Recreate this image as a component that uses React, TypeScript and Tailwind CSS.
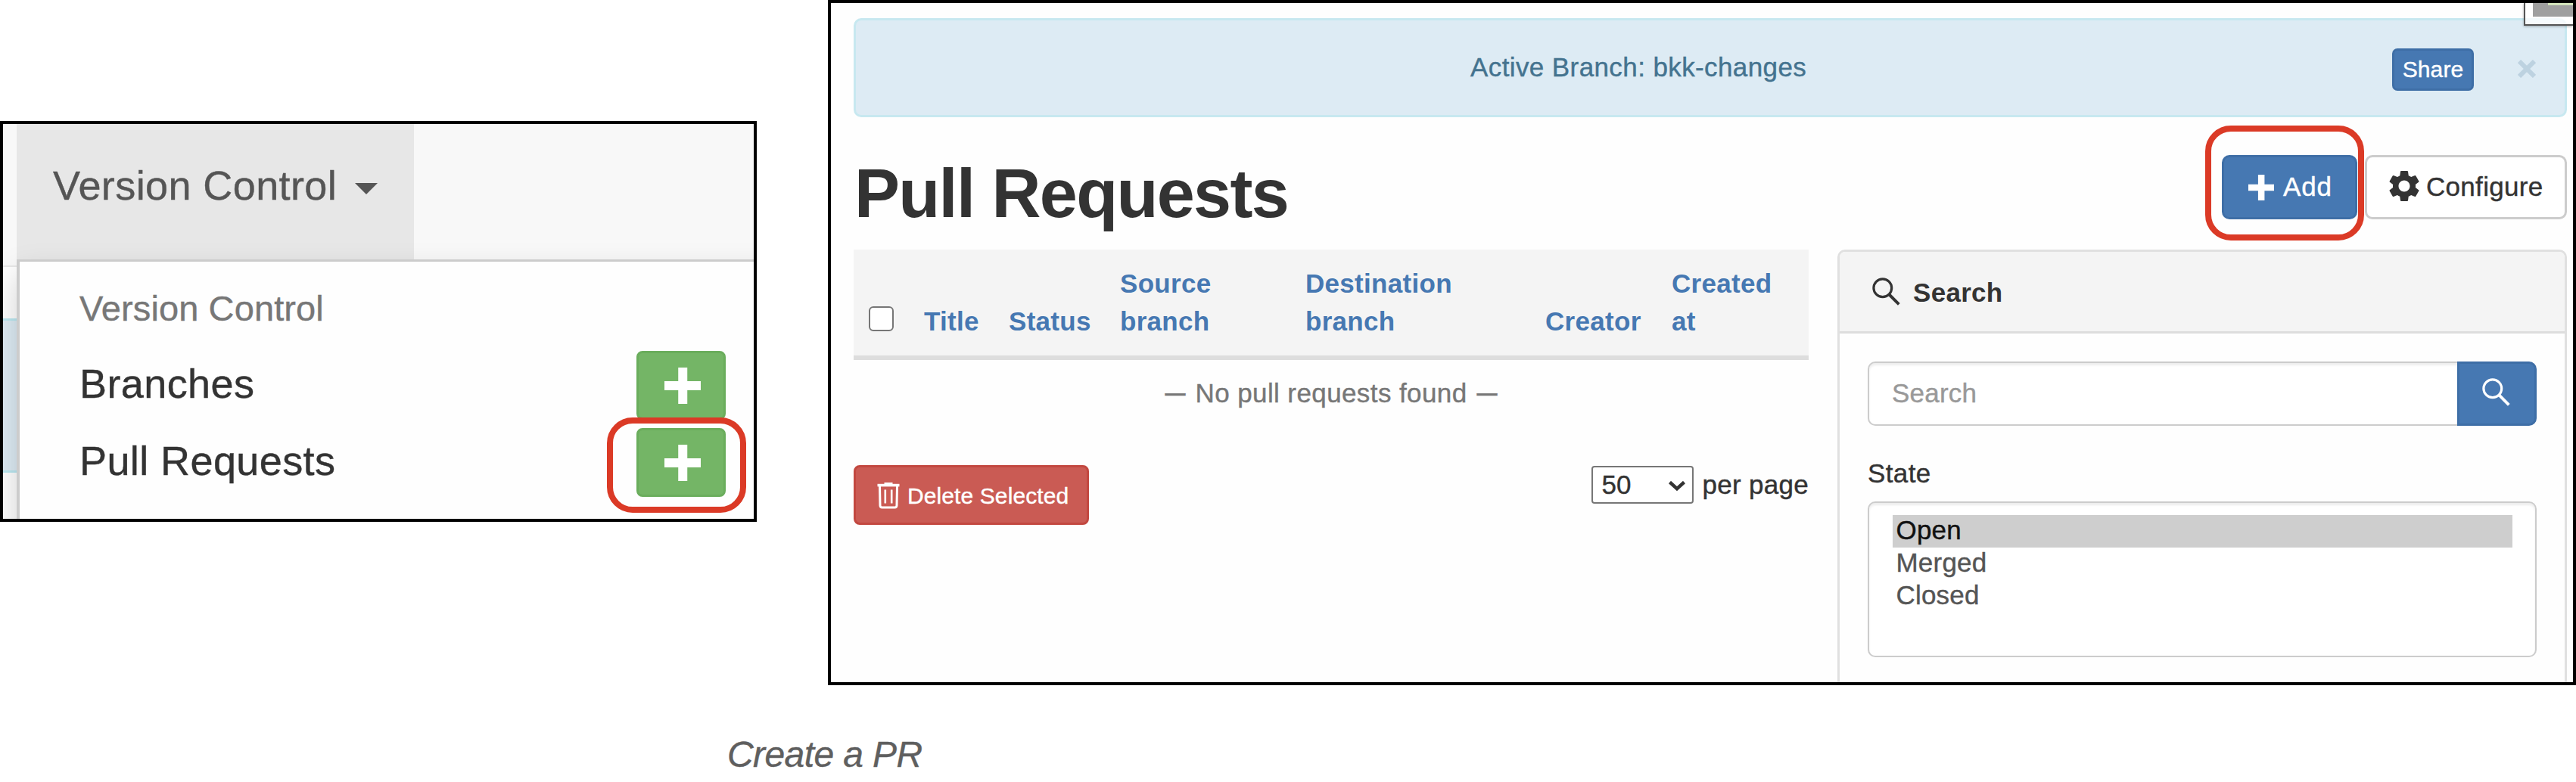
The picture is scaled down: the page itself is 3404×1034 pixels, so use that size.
import React from "react";
import { MdSettings } from "react-icons/md";

function Plus({ className }: { className: string }) {
  return (
    <svg viewBox="0 0 50 50" className={className} fill="currentColor">
      <path d="M19 0h12.500v18.700H50v12.500H31.500V50H19V31.200H0V18.700h19z" />
    </svg>
  );
}

function Magnifier() {
  return (
    <svg viewBox="0 0 37 37" className="size-[37px] shrink-0" fill="none" stroke="currentColor">
      <circle cx="13.8" cy="13.8" r="11.9" strokeWidth="3.2" />
      <path d="M22.500 22.500L35.300 35.300" strokeWidth="3.900" />
    </svg>
  );
}

function Trash() {
  return (
    <svg viewBox="0 0 30 35" className="h-[35px] w-[30px] shrink-0" fill="none" stroke="currentColor">
      <path d="M0.500 3.600H29.500" strokeWidth="3.600" />
      <path d="M9.500 1.200H20.500" strokeWidth="2.400" />
      <path d="M3.500 5L4 30.500Q4.200 33 6.500 33H23.500Q25.800 33 26 30.500L26.500 5" strokeWidth="3" />
      <path d="M10.800 9.500V27.500M19.200 9.500V27.500" strokeWidth="2.600" />
    </svg>
  );
}

function Highlight({ className }: { className: string }) {
  return <span className={`pointer-events-none absolute z-10 rounded-[34px] border-8 border-[#db3a26] ${className}`} />;
}

function MenuRow({ label, highlighted = false }: { label: string; highlighted?: boolean }) {
  return (
    <div className="flex h-[102px] w-[970px] items-center justify-between pr-[37px] pl-[79px]">
      <span className="mb-px text-[54px] tracking-[0.4px] text-[#333]">{label}</span>
      <button className="relative mt-[3px] flex h-[91px] w-[118px] items-center justify-center rounded-[8px] border-[3px] border-[#6aad5c] bg-[#74b566] pl-[3px] text-white">
        <Plus className="size-[48px]" />
        {highlighted && <Highlight className="-top-[17px] -left-[42px] h-[126px] w-[184px]" />}
      </button>
    </div>
  );
}

function MenuFigure() {
  return (
    <section className="relative mt-[160px] h-[530px] w-[1000px] shrink-0 overflow-hidden border-4 border-black bg-[#fefefe]">
      <nav className="h-[189px] border-b-2 border-[#e7e7e7] bg-[#f8f8f8] pl-[18px]">
        <div className="h-[187px] w-[525px] bg-[#e7e7e7]">
          <div className="flex h-[162px] items-center pl-[48px]">
            <span className="text-[54px] tracking-[0.400px] text-[#555]">Version Control</span>
            <svg viewBox="0 0 30 15" className="mt-[8px] ml-[24px] h-[15px] w-[30px]" fill="#555">
              <path d="M0 0H30L15 15z" />
            </svg>
          </div>
        </div>
      </nav>
      <div className="mt-[68px] h-[204px] border-y-3 border-[#bce8f1] bg-[#ddebf4]" />
      <div className="absolute top-[179px] left-[18px] h-[420px] w-[1050px] border-t-[3px] border-l-4 border-[#ccc] bg-[#fefefe] shadow-[0_20px_40px_rgba(0,0,0,0.175)]">
        <div className="h-[111px] pt-[24px] pl-[79px] text-[47px] leading-[76px] tracking-[0.1px] text-[#777]">Version Control</div>
        <MenuRow label="Branches" />
        <MenuRow label="Pull Requests" highlighted />
      </div>
    </section>
  );
}

function BranchAlert() {
  return (
    <div className="flex h-[131px] items-center rounded-[10px] border-3 border-[#c7e8f0] bg-[#ddebf4] pr-[38px] pl-[812px]">
      <span className="text-[35px] tracking-[0.4px] text-[#44738f]">Active Branch: bkk-changes</span>
      <button className="mt-[5px] mr-[58px] ml-auto flex h-[56px] w-[108px] items-center justify-center rounded-[7px] border-3 border-[#3e6ea6] bg-[#4678b2] pb-[2px] text-[30px] tracking-[0.1px] text-white">
        Share
      </button>
      <svg viewBox="0 0 24 24" className="mt-[3px] size-[24px]" stroke="#bdd2e0" strokeWidth="6">
        <path d="M2 2L22 22M22 2L2 22" />
      </svg>
    </div>
  );
}

function TitleRow() {
  return (
    <div className="mt-[50px] flex h-[125px] items-start">
      <h1 className="mr-auto pl-px text-[90px] leading-[102px] font-bold tracking-[-1.700px] text-[#333] [-webkit-text-stroke:0]">Pull Requests</h1>
      <button className="relative mr-[10px] flex h-[85px] w-[179px] items-center rounded-[10px] border-3 border-[#3e6ea6] bg-[#4678b2] pl-[32px] text-[35px] tracking-[0.8px] text-white">
        <Plus className="mr-[12px] size-[34px]" />
        Add
        <Highlight className="-top-[42px] -left-[25px] h-[152px] w-[210px]" />
      </button>
      <button className="flex h-[85px] w-[267px] items-center rounded-[10px] border-3 border-[#ccc] bg-white pl-[24px] text-[35px] tracking-[0.3px] text-[#333]">
        <MdSettings className="mr-[4px] mb-[3px] size-[50px] shrink-0" />
        Configure
      </button>
    </div>
  );
}

function RequestsTable() {
  return (
    <div className="w-[1262px]">
      <div className="grid h-[146px] grid-cols-[93px_112px_147px_245px_317px_167px_1fr] items-end border-b-6 border-[#ddd] bg-[#f4f4f4] pb-[20px] text-[35px] leading-[50px] font-bold tracking-[0.3px] text-[#4678b2] [-webkit-text-stroke:0]">
        <span className="mb-[12px] ml-[20px] size-[33px] rounded-[6px] border-[2.500px] border-[#767676] bg-white" />
        <span>Title</span>
        <span>Status</span>
        <span>Source<br />branch</span>
        <span>Destination<br />branch</span>
        <span>Creator</span>
        <span>Created<br />at</span>
      </div>
      <div className="flex h-[88px] items-center justify-center gap-[13px] text-[35px] tracking-[0.4px] text-[#777]">
        <span className="text-[27px] font-bold tracking-normal">—</span>
        <span>No pull requests found</span>
        <span className="text-[27px] font-bold tracking-normal">—</span>
      </div>
      <div className="mt-[51px] flex items-start justify-between">
        <button className="flex h-[79px] w-[311px] items-center gap-[10px] rounded-[8px] border-3 border-[#c24840] bg-[#ca5b54] pt-[2px] pl-[28px] text-[30px] tracking-[0.1px] text-white">
          <Trash />
          Delete Selected
        </button>
        <div className="flex items-center gap-[11px] pt-px text-[35px] leading-[50px] tracking-[0.3px] text-[#333]">
          <div className="flex h-[50px] w-[135px] items-center justify-between rounded-[4px] border-2 border-[#767676] bg-white pr-[9px] pl-[11px]">
            <span className="tracking-normal">50</span>
            <svg viewBox="0 0 22 13" className="mt-[2px] h-[13px] w-[22px]" fill="none" stroke="#333" strokeWidth="4.500">
              <path d="M1.500 1.500L11 10.200L20.500 1.500" />
            </svg>
          </div>
          <span>per page</span>
        </div>
      </div>
    </div>
  );
}

function SearchPanel() {
  return (
    <aside className="h-[640px] w-[964px] rounded-[10px] border-3 border-[#e0e0e0] text-[35px]">
      <div className="flex h-[108px] items-center rounded-t-[7px] border-b-3 border-[#ddd] bg-[#f4f4f4] pl-[43px] text-[#333]">
        <Magnifier />
        <span className="mt-[4px] ml-[17px] font-bold tracking-[0.3px] [-webkit-text-stroke:0]">Search</span>
      </div>
      <div className="px-[37px] pt-[37px]">
        <div className="flex h-[85px]">
          <div className="flex flex-1 items-center rounded-l-[10px] border-2 border-r-0 border-[#ccc] bg-white pl-[30px] tracking-[0.2px] text-[#999] shadow-[inset_0_3px_3px_rgba(0,0,0,0.075)]">
            Search
          </div>
          <button className="flex w-[105px] items-center rounded-r-[10px] border-3 border-[#3e6ea6] bg-[#4678b2] pb-[4px] pl-[30px] text-white">
            <Magnifier />
          </button>
        </div>
        <div className="mt-[38px] leading-[50px] tracking-[0.4px] text-[#333]">State</div>
        <ul className="mt-[12px] h-[206px] rounded-[10px] border-2 border-[#ccc] bg-white px-[30.500px] pt-[16px] leading-[40px] tracking-[0.2px] text-[#555] shadow-[inset_0_3px_3px_rgba(0,0,0,0.075)]">
          <li className="h-[43px] bg-[#cecece] pl-[5px] text-[#111]">Open</li>
          <li className="h-[43px] pl-[5px]">Merged</li>
          <li className="h-[43px] pl-[5px]">Closed</li>
        </ul>
      </div>
    </aside>
  );
}

function PullRequestsFigure() {
  return (
    <section className="relative ml-[94px] h-[906px] w-[2310px] shrink-0 overflow-hidden border-4 border-black bg-[#fefefe] pt-[20px] pr-[8px] pl-[30px]">
      <BranchAlert />
      <TitleRow />
      <div className="flex items-start gap-[38px]">
        <RequestsTable />
        <SearchPanel />
      </div>
      <div className="absolute top-0 right-0 h-[30px] w-[65px] border-b-2 border-l-2 border-[#555] bg-white/80 pl-[10px] shadow-[0_1px_3px_rgba(0,0,0,0.3)]">
        <div className="h-[18px] bg-[#9f9f9f] pl-[20px]">
          <div className="h-[3px] bg-[#d3e3bb]" />
        </div>
      </div>
    </section>
  );
}

export default function App() {
  return (
    <main className="h-[1034px] w-[3404px] overflow-hidden bg-white font-['Liberation_Sans',Arial,sans-serif] [-webkit-text-stroke:0.4px]">
      <div className="flex h-[906px] items-start">
        <MenuFigure />
        <PullRequestsFigure />
      </div>
      <p className="mt-[62px] ml-[961px] text-[48px] leading-[60px] tracking-[-0.600px] text-[#5f5f5f] italic">Create a PR</p>
    </main>
  );
}
